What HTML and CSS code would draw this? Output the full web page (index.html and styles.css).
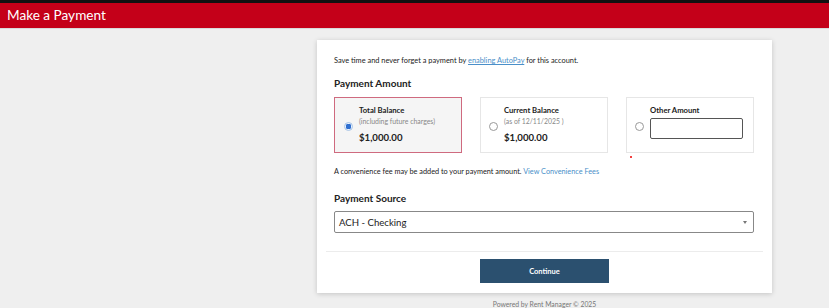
FILE: index.html
```html
<!DOCTYPE html>
<html>
<head>
<title>Make a Payment</title>
<link rel="stylesheet" href="styles.css">
</head>
<body>
  <header class="page-header">
    <h1>Make a Payment</h1>
  </header>

  <main class="content">
    <div class="card">
      <p class="intro">Save time and never forget a payment by <a href="#" class="autopay">enabling AutoPay</a> for this account.</p>

      <h2>Payment Amount</h2>
      <div class="options">
        <label class="option selected">
          <span class="radio checked"></span>
          <span class="option-text">
            <span class="option-title">Total Balance</span>
            <span class="option-note">(including future charges)</span>
            <span class="option-amount">$1,000.00</span>
          </span>
        </label>
        <label class="option">
          <span class="radio"></span>
          <span class="option-text">
            <span class="option-title">Current Balance</span>
            <span class="option-note">(as of 12/11/2025 )</span>
            <span class="option-amount">$1,000.00</span>
          </span>
        </label>
        <div class="option-wrap">
          <label class="option other">
            <span class="radio"></span>
            <span class="option-text">
              <span class="option-title">Other Amount</span>
              <input type="text" class="amount-input">
            </span>
          </label>
          <span class="required-dot"></span>
        </div>
      </div>

      <p class="fee">A convenience fee may be added to your payment amount. <a href="#">View Convenience Fees</a></p>

      <h2 class="source-title">Payment Source</h2>
      <div class="select">
        <span>ACH - Checking</span>
        <span class="caret"></span>
      </div>

      <div class="actions">
        <button class="continue">Continue</button>
      </div>
    </div>
    <footer>Powered by Rent Manager &copy; 2025</footer>
  </main>
</body>
</html>
```
FILE: styles.css
```css
body {
  margin: 0;
  font-family: Lato, "Open Sans", sans-serif;
  background-color: #efefef;
  color: #222;
}

.page-header {
  border-top: 3px solid #111;
  background-color: #c40019;
  height: 25px;
  border-bottom: 1px solid #d9d9d9;
  padding-left: 7px;
}

.page-header h1 {
  margin: 0;
  color: #fff;
  font-size: 13.6px;
  font-weight: normal;
  line-height: 25px;
}

.content {
  padding: 11px 57px 0 317px;
}

.card {
  background-color: #fff;
  box-shadow: 0 1px 5px rgba(0, 0, 0, 0.18);
  padding: 14px 9px 10px 17px;
}

.intro {
  margin: 0;
  font-size: 7.4px;
  line-height: 14px;
}

a {
  color: #4a8fc9;
  text-decoration: none;
}

a.autopay {
  text-decoration: underline;
}

h2 {
  margin: 8px 0 7px;
  font-size: 10px;
  font-weight: bold;
  line-height: 14px;
}

.options {
  display: grid;
  grid-template-columns: repeat(3, 128px);
  gap: 18px;
}

.option-wrap {
  position: relative;
  display: flex;
}

.option {
  flex: 1;
  height: 56px;
  border: 1px solid #e6e6e6;
  display: flex;
  align-items: center;
  padding-left: 8px;
  gap: 6px;
  box-sizing: border-box;
}

.option.selected {
  background-color: #f5f5f5;
  border-color: #cf6a7f;
  padding-left: 9px;
}

.radio {
  width: 7px;
  height: 7px;
  border: 1px solid #999;
  border-radius: 50%;
  background: #fff;
  flex-shrink: 0;
  margin-top: 2px;
}

.radio.checked {
  border-color: #a8c4e6;
  background: radial-gradient(circle, #2f6fd0 55%, #eaf1fb 60%);
}

.option-text {
  display: flex;
  flex-direction: column;
}

.option-title {
  font-size: 7.7px;
  font-weight: bold;
  line-height: 11px;
}

.option-note {
  font-size: 6.9px;
  color: #888;
  line-height: 11px;
}

.option-amount {
  font-size: 9.6px;
  font-weight: bold;
  line-height: 14px;
  margin-top: 4px;
}

.option.other .option-title {
  margin-top: -6px;
}

.amount-input {
  width: 93px;
  height: 21px;
  box-sizing: border-box;
  border: 1px solid #555;
  border-radius: 2px;
  margin-top: 2px;
}

.required-dot {
  position: absolute;
  left: 4px;
  top: 59px;
  width: 2px;
  height: 2px;
  background-color: #e00;
  border-radius: 50%;
}

.fee {
  margin: 14px 0 0;
  font-size: 7.3px;
  line-height: 10px;
}

h2.source-title {
  margin: 14px 0 6px;
}

.select {
  width: 420px;
  height: 22px;
  border: 1px solid #888;
  border-radius: 2px;
  display: flex;
  align-items: center;
  justify-content: space-between;
  padding: 0 6px 0 4px;
  font-size: 9.6px;
  box-sizing: border-box;
}

.caret {
  width: 0;
  height: 0;
  border-left: 2.5px solid transparent;
  border-right: 2.5px solid transparent;
  border-top: 3px solid #777;
}

.actions {
  margin: 18px 0 0 -8px;
  border-top: 1px solid #ececec;
  padding-top: 7px;
  display: flex;
  justify-content: center;
}

.continue {
  width: 129px;
  height: 24px;
  background-color: #2b506f;
  color: #fff;
  border: none;
  font-family: Lato, sans-serif;
  font-size: 7.5px;
  font-weight: bold;
}

footer {
  text-align: center;
  font-size: 6.8px;
  color: #777;
  margin-top: 7px;
}
```
